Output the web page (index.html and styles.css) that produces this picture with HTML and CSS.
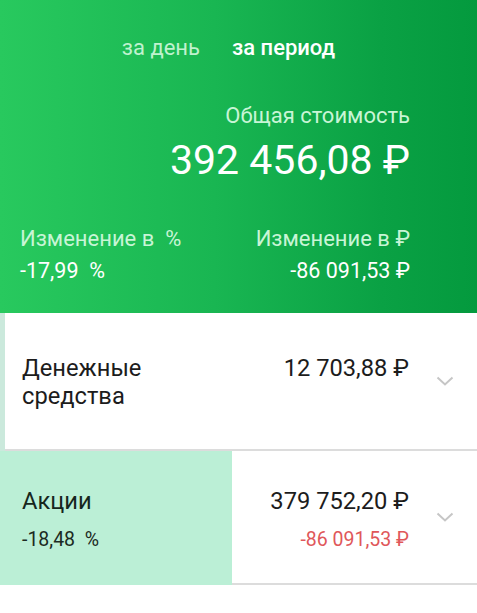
FILE: index.html
```html
<!DOCTYPE html>
<html lang="ru">
<head>
<meta charset="utf-8">
<title>Портфель</title>
<link rel="stylesheet" href="styles.css">
</head>
<body>
<header class="summary">
  <nav class="tabs">
    <span class="tab">за день</span>
    <span class="tab tab-active">за период</span>
  </nav>
  <div class="total">
    <div class="total-label">Общая стоимость</div>
    <div class="total-value">392 456,08 ₽</div>
  </div>
  <div class="changes">
    <div class="change">
      <div class="change-label">Изменение в&nbsp; %</div>
      <div class="change-value">-17,99&nbsp; %</div>
    </div>
    <div class="change change-right">
      <div class="change-label">Изменение в ₽</div>
      <div class="change-value">-86 091,53 ₽</div>
    </div>
  </div>
</header>
<section class="assets">
  <div class="asset asset-cash">
    <div class="bar bar-cash" style="width:5px"></div>
    <div class="asset-name">Денежные<br>средства</div>
    <div class="asset-amounts">
      <div class="asset-sum">12 703,88 ₽</div>
    </div>
    <svg class="chevron" viewBox="0 0 18 10" width="18" height="10"><path d="M1.5 1.5 L9 8.5 L16.5 1.5" fill="none" stroke="#c6c6c6" stroke-width="2"/></svg>
  </div>
  <div class="asset asset-stocks">
    <div class="bar bar-stocks" style="width:232px"></div>
    <div class="asset-name">
      <div>Акции</div>
      <div class="asset-pct">-18,48&nbsp; %</div>
    </div>
    <div class="asset-amounts">
      <div class="asset-sum">379 752,20 ₽</div>
      <div class="asset-delta">-86 091,53 ₽</div>
    </div>
    <svg class="chevron" viewBox="0 0 18 10" width="18" height="10"><path d="M1.5 1.5 L9 8.5 L16.5 1.5" fill="none" stroke="#c6c6c6" stroke-width="2"/></svg>
  </div>
</section>
</body>
</html>
```
FILE: styles.css
```css
html, body {
  margin: 0;
  padding: 0;
  background: #ffffff;
}
body {
  font-family: Roboto, "Noto Sans", sans-serif;
  width: 477px;
}
.summary {
  height: 313px;
  box-sizing: border-box;
  background: linear-gradient(to right, #28c95e 0%, #19b652 45%, #0aa144 80%, #049a3e 100%);
  padding: 33px 67px 0 20px;
  color: #ffffff;
}
.tabs {
  display: flex;
  justify-content: center;
  gap: 32px;
  padding-left: 27px;
  font-size: 22px;
  line-height: 30px;
}
.tab {
  color: #c0f2cf;
}
.tab-active {
  color: #ffffff;
  font-weight: 500;
}
.total {
  text-align: right;
  margin-top: 38px;
}
.total-label {
  font-size: 22px;
  line-height: 30px;
  color: #c8f5d6;
}
.total-value {
  font-size: 41px;
  line-height: 48px;
  margin-top: 5px;
}
.changes {
  display: flex;
  justify-content: space-between;
  margin-top: 40px;
}
.change-right {
  text-align: right;
}
.change-label {
  font-size: 22px;
  line-height: 30px;
  color: #c8f5d6;
}
.change-value {
  font-size: 21.5px;
  line-height: 30px;
  margin-top: 2px;
}
.asset {
  position: relative;
  display: flex;
  align-items: center;
  border-bottom: 2px solid #dcdcdc;
  padding: 0 23px 0 22px;
  color: #1c1c1c;
}
.asset-cash {
  height: 138px;
  box-sizing: border-box;
}
.asset-stocks {
  height: 134px;
  box-sizing: border-box;
}
.bar {
  position: absolute;
  left: 0;
  top: 0;
  bottom: -2px;
}
.bar-cash {
  background: #cbe9dc;
}
.bar-stocks {
  background: #bbefd6;
}
.asset-name {
  position: relative;
  flex: 1;
  font-size: 23.7px;
  line-height: 28px;
}
.asset-cash .asset-name {
  align-self: flex-start;
  margin-top: 41px;
}
.asset-cash .asset-amounts {
  align-self: flex-start;
  margin-top: 41px;
}
.asset-amounts {
  position: relative;
  text-align: right;
  font-size: 23.7px;
  line-height: 28px;
}
.asset-stocks .asset-name,
.asset-stocks .asset-amounts {
  margin-top: 6px;
}
.asset-pct {
  font-size: 19.5px;
  margin-top: 11px;
  color: #1c2a22;
}
.asset-delta {
  font-size: 19.5px;
  margin-top: 11px;
  color: #e0575a;
}
.asset-stocks .asset-name {
  color: #16261d;
}
.chevron {
  position: relative;
  margin-left: 27px;
  flex: none;
}
```
